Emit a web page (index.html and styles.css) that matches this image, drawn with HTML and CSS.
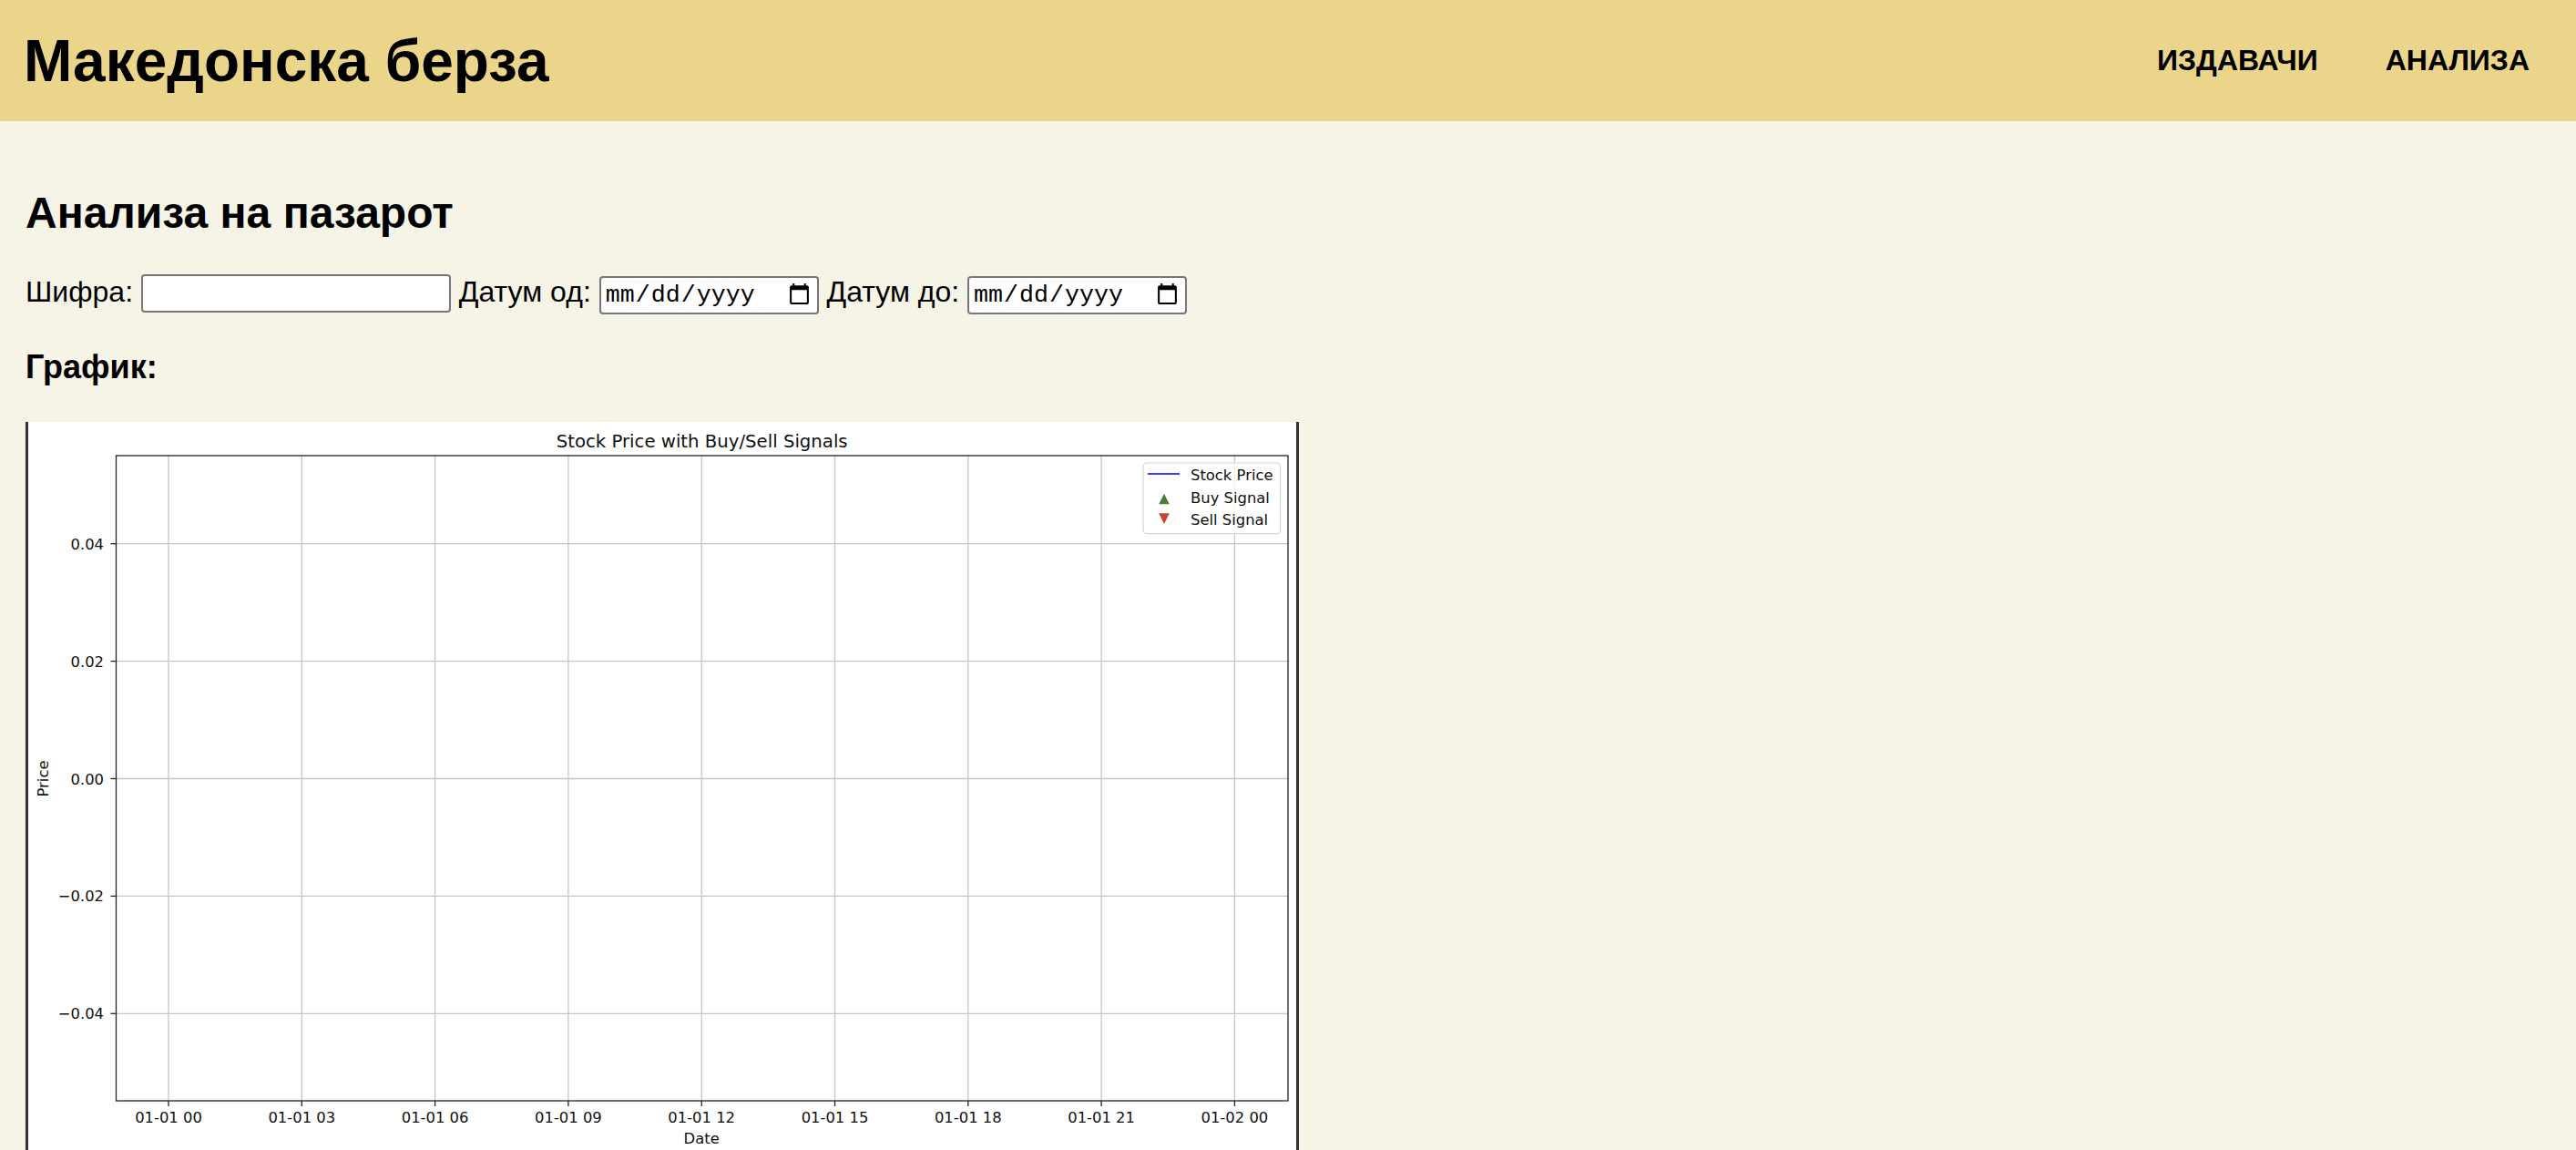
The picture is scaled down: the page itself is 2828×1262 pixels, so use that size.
FILE: index.html
```html
<!DOCTYPE html>
<html lang="mk">
<head>
<meta charset="utf-8">
<title>Македонска берза</title>
<link rel="stylesheet" href="styles.css">
</head>
<body>
<header class="site-header">
  <h1 class="brand">Македонска берза</h1>
  <nav class="main-nav">
    <a href="#" class="nav-link">Издавачи</a>
    <a href="#" class="nav-link">Анализа</a>
  </nav>
</header>
<main class="content">
  <h2 class="page-title">Анализа на пазарот</h2>
  <form class="filters">
    <label for="symbol">Шифра:</label> <input id="symbol" type="text" class="field field-text">
    <label for="from">Датум од:</label> <input id="from" type="date" class="field field-date">
    <label for="to">Датум до:</label> <input id="to" type="date" class="field field-date">
  </form>
  <h3 class="chart-heading">График:</h3>
  <div class="chart">
    <svg class="chart-figure" viewBox="31 463 1392 820" xmlns="http://www.w3.org/2000/svg">
      <text class="fig-title" x="770.7" y="491" text-anchor="middle">Stock Price with Buy/Sell Signals</text>
      <g class="grid">
        <line x1="185" y1="500" x2="185" y2="1208"/>
        <line x1="331.3" y1="500" x2="331.3" y2="1208"/>
        <line x1="477.6" y1="500" x2="477.6" y2="1208"/>
        <line x1="623.9" y1="500" x2="623.9" y2="1208"/>
        <line x1="770.2" y1="500" x2="770.2" y2="1208"/>
        <line x1="916.5" y1="500" x2="916.5" y2="1208"/>
        <line x1="1062.8" y1="500" x2="1062.8" y2="1208"/>
        <line x1="1209.1" y1="500" x2="1209.1" y2="1208"/>
        <line x1="1355.4" y1="500" x2="1355.4" y2="1208"/>
        <line x1="127.5" y1="596.7" x2="1414" y2="596.7"/>
        <line x1="127.5" y1="725.6" x2="1414" y2="725.6"/>
        <line x1="127.5" y1="854.5" x2="1414" y2="854.5"/>
        <line x1="127.5" y1="983.4" x2="1414" y2="983.4"/>
        <line x1="127.5" y1="1112.3" x2="1414" y2="1112.3"/>
      </g>
      <rect class="axes-frame" x="127.5" y="500" width="1286.5" height="708"/>
      <g class="ticks">
        <line x1="121.5" y1="596.7" x2="127.5" y2="596.7"/>
        <line x1="121.5" y1="725.6" x2="127.5" y2="725.6"/>
        <line x1="121.5" y1="854.5" x2="127.5" y2="854.5"/>
        <line x1="121.5" y1="983.4" x2="127.5" y2="983.4"/>
        <line x1="121.5" y1="1112.3" x2="127.5" y2="1112.3"/>
        <line x1="185" y1="1208" x2="185" y2="1214"/>
        <line x1="331.3" y1="1208" x2="331.3" y2="1214"/>
        <line x1="477.6" y1="1208" x2="477.6" y2="1214"/>
        <line x1="623.9" y1="1208" x2="623.9" y2="1214"/>
        <line x1="770.2" y1="1208" x2="770.2" y2="1214"/>
        <line x1="916.5" y1="1208" x2="916.5" y2="1214"/>
        <line x1="1062.8" y1="1208" x2="1062.8" y2="1214"/>
        <line x1="1209.1" y1="1208" x2="1209.1" y2="1214"/>
        <line x1="1355.4" y1="1208" x2="1355.4" y2="1214"/>
      </g>
      <g class="tick-label y-labels" text-anchor="end">
        <text x="114" y="602.7">0.04</text>
        <text x="114" y="731.6">0.02</text>
        <text x="114" y="860.5">0.00</text>
        <text x="114" y="989.4">−0.02</text>
        <text x="114" y="1118.3">−0.04</text>
      </g>
      <g class="tick-label x-labels" text-anchor="middle">
        <text x="185" y="1232">01-01 00</text>
        <text x="331.3" y="1232">01-01 03</text>
        <text x="477.6" y="1232">01-01 06</text>
        <text x="623.9" y="1232">01-01 09</text>
        <text x="770.2" y="1232">01-01 12</text>
        <text x="916.5" y="1232">01-01 15</text>
        <text x="1062.8" y="1232">01-01 18</text>
        <text x="1209.1" y="1232">01-01 21</text>
        <text x="1355.4" y="1232">01-02 00</text>
      </g>
      <text class="axis-label" x="770.2" y="1255" text-anchor="middle">Date</text>
      <text class="axis-label" transform="translate(53 854.5) rotate(-90)" text-anchor="middle">Price</text>
      <g class="legend">
        <rect class="legend-box" x="1255" y="508" width="150.7" height="77.7" rx="4"/>
        <line class="legend-line" x1="1260" y1="520" x2="1295" y2="520"/>
        <text class="legend-text" x="1307" y="527.3">Stock Price</text>
        <polygon class="buy-marker" points="1278,541.7 1283.8,553.3 1272.2,553.3"/>
        <text class="legend-text" x="1307" y="551.7">Buy Signal</text>
        <polygon class="sell-marker" points="1272.2,563.3 1283.8,563.3 1278,575"/>
        <text class="legend-text" x="1307" y="575.5">Sell Signal</text>
      </g>
    </svg>
  </div>
</main>
</body>
</html>
```

FILE: styles.css
```css
* {
  box-sizing: border-box;
}

html,
body {
  margin: 0;
}

body {
  background: #f6f4e7;
  color: #000;
  font-family: "Liberation Sans", Arial, sans-serif;
}

.site-header {
  display: flex;
  align-items: center;
  justify-content: space-between;
  height: 133px;
  padding: 0 51px 0 26px;
  background: #ead58a;
}

.brand {
  margin: 0;
  font-size: 64px;
  font-weight: bold;
}

.main-nav {
  display: flex;
  gap: 74px;
}

.nav-link {
  color: #000;
  text-decoration: none;
  font-size: 32px;
  font-weight: bold;
  text-transform: uppercase;
}

.content {
  padding: 73px 28px 0;
}

.page-title {
  margin: 0;
  font-size: 48px;
  font-weight: bold;
}

.filters {
  margin: 40px 0 0;
  font-size: 32px;
}

.field {
  font-size: 26.67px;
  border: 2px solid #767676;
  border-radius: 4px;
  padding: 2px 4px;
  background: #fff;
  color: #000;
  margin: 0;
}

.field-text {
  width: 340px;
  height: 42px;
}

.field-date {
  width: 241px;
  height: 42px;
  font-family: "Liberation Mono", "Courier New", monospace;
}

.chart-heading {
  margin: 37px 0 0;
  font-size: 36px;
  font-weight: bold;
}

.chart {
  margin-top: 39px;
  width: 1398px;
  height: 820px;
  background: #fff;
  border-left: 3px solid #333;
  border-right: 3px solid #333;
}

.chart-figure {
  display: block;
  width: 1392px;
  height: 820px;
  font-family: "DejaVu Sans", sans-serif;
}

.fig-title {
  font-size: 19.7px;
  fill: #111;
}

.grid line {
  stroke: #c6c6c6;
  stroke-width: 1.3;
}

.axes-frame {
  fill: none;
  stroke: #222;
  stroke-width: 1.3;
}

.ticks line {
  stroke: #222;
  stroke-width: 1.3;
}

.tick-label,
.axis-label,
.legend-text {
  font-size: 16.4px;
  fill: #111;
}

.legend-box {
  fill: #fff;
  fill-opacity: 0.8;
  stroke: #d6d6d6;
  stroke-width: 1.2;
}

.legend-line {
  stroke: #3b3bff;
  stroke-width: 2;
}

.buy-marker {
  fill: #4b7e3b;
}

.sell-marker {
  fill: #c84630;
}
```
